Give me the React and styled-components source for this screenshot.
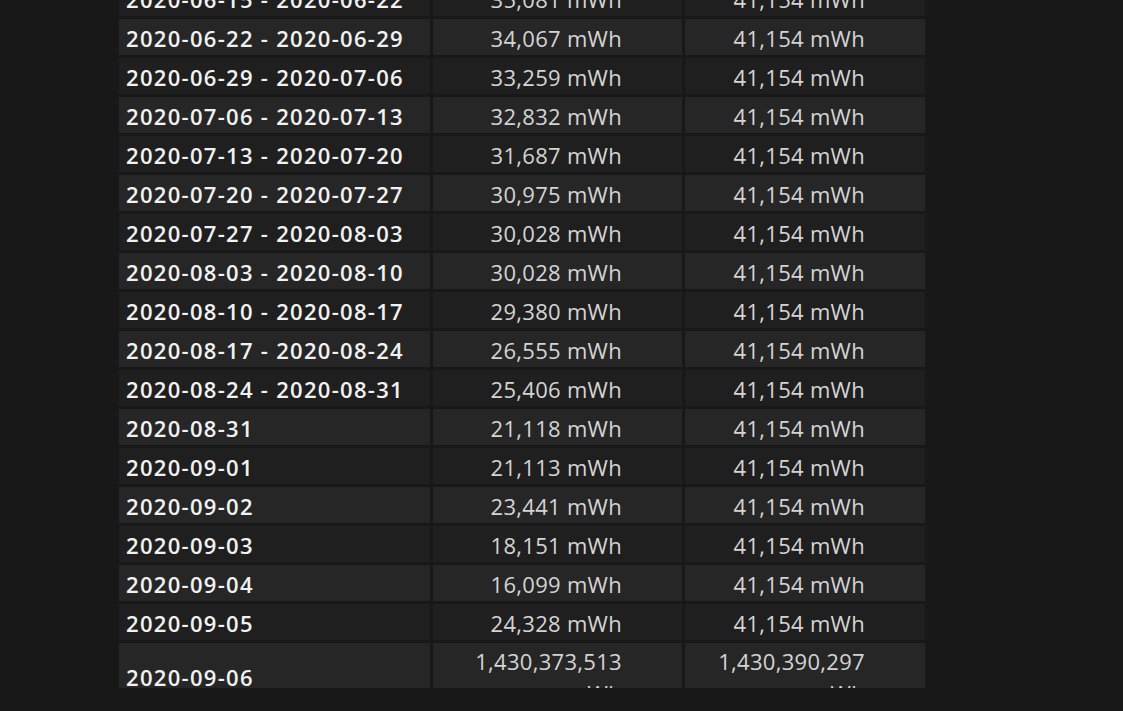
import React from "react";
import styled, { createGlobalStyle } from "styled-components";

const Global = createGlobalStyle`
  html, body {
    margin: 0;
    background: #181818;
    overflow: hidden;
  }
`;

const Page = styled.div`
  padding-left: 116px;
  height: 711px;
  font-family: "Open Sans", "Noto Sans", sans-serif;
`;

const Table = styled.table`
  margin-top: -23px;
  border-spacing: 3px;
  font-size: 22px;
`;

const Row = styled.tr`
  background: ${(p) => (p.$light ? "#262626" : "#1f1f1f")};
`;

const DateCell = styled.td`
  width: 297px;
  height: 34px;
  padding: 2px 7px 0;
  color: #f2f2f2;
  font-weight: 600;
  letter-spacing: 1.3px;
  white-space: nowrap;
  line-height: 32px;
`;

const NumCell = styled.td`
  width: ${(p) => p.$w}px;
  padding: 2px 60px 0 7px;
  color: #d4d4d4;
  text-align: right;
  letter-spacing: 0.3px;
  line-height: 32px;
`;

const rows = [
  ["2020-06-15 - 2020-06-22", "35,081 mWh", "41,154 mWh"],
  ["2020-06-22 - 2020-06-29", "34,067 mWh", "41,154 mWh"],
  ["2020-06-29 - 2020-07-06", "33,259 mWh", "41,154 mWh"],
  ["2020-07-06 - 2020-07-13", "32,832 mWh", "41,154 mWh"],
  ["2020-07-13 - 2020-07-20", "31,687 mWh", "41,154 mWh"],
  ["2020-07-20 - 2020-07-27", "30,975 mWh", "41,154 mWh"],
  ["2020-07-27 - 2020-08-03", "30,028 mWh", "41,154 mWh"],
  ["2020-08-03 - 2020-08-10", "30,028 mWh", "41,154 mWh"],
  ["2020-08-10 - 2020-08-17", "29,380 mWh", "41,154 mWh"],
  ["2020-08-17 - 2020-08-24", "26,555 mWh", "41,154 mWh"],
  ["2020-08-24 - 2020-08-31", "25,406 mWh", "41,154 mWh"],
  ["2020-08-31", "21,118 mWh", "41,154 mWh"],
  ["2020-09-01", "21,113 mWh", "41,154 mWh"],
  ["2020-09-02", "23,441 mWh", "41,154 mWh"],
  ["2020-09-03", "18,151 mWh", "41,154 mWh"],
  ["2020-09-04", "16,099 mWh", "41,154 mWh"],
  ["2020-09-05", "24,328 mWh", "41,154 mWh"],
  ["2020-09-06", "1,430,373,513 mWh", "1,430,390,297 mWh"],
];

export default function App() {
  return (
    <Page>
      <Global />
      <Table>
        <tbody>
          {rows.map(([d, a, b], i) => (
            <Row key={d} $light={i % 2 === 1}>
              <DateCell>{d}</DateCell>
              <NumCell $w={182}>{a}</NumCell>
              <NumCell $w={173}>{b}</NumCell>
            </Row>
          ))}
        </tbody>
      </Table>
    </Page>
  );
}
